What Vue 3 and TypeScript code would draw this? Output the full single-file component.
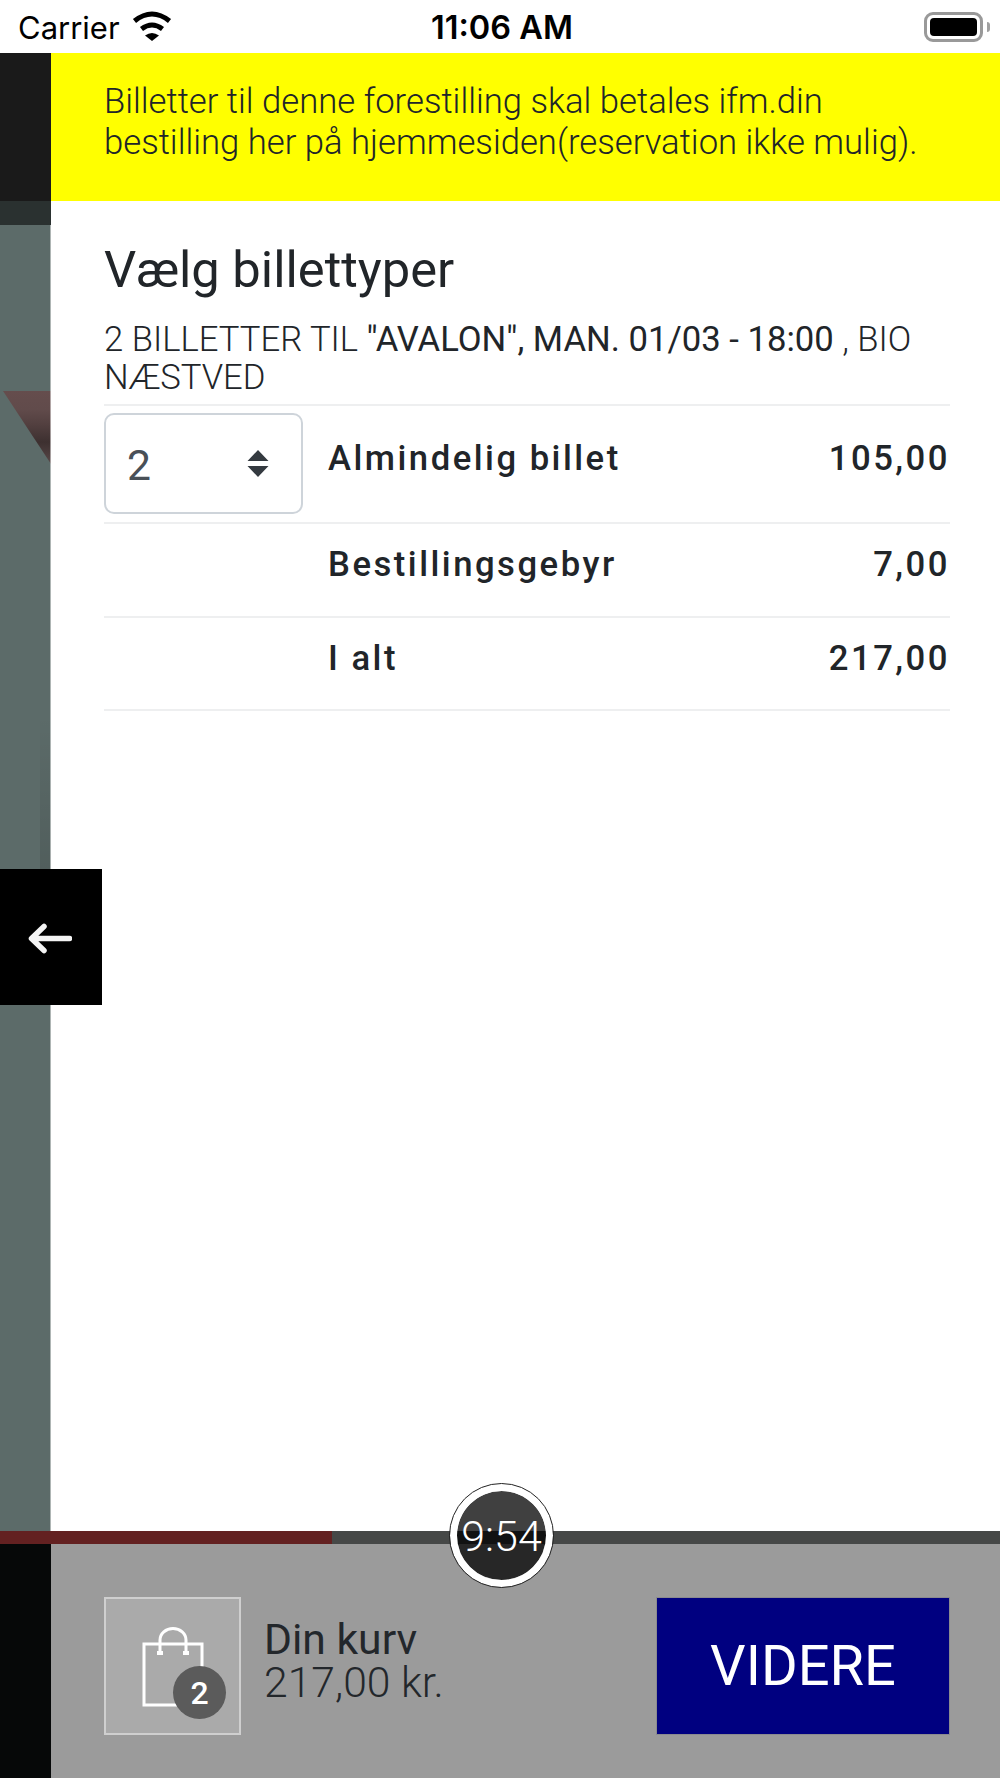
<script setup lang="ts">
interface Row { label: string; price: string; qty?: number; }
const rows: Row[] = [
  { label: 'Almindelig billet', price: '105,00', qty: 2 },
  { label: 'Bestillingsgebyr', price: '7,00' },
  { label: 'I alt', price: '217,00' },
];
</script>

<template>
  <div class="phone">
    <header class="status">
      <div class="status-left">
        <span class="carrier">Carrier</span>
        <svg class="wifi" viewBox="0 0 40 30" aria-hidden="true">
          <path d="M2.500 10 Q20 -4 37.500 10" fill="none" stroke="#000" stroke-width="5" />
          <path d="M9.500 18 Q20 10 30.500 18" fill="none" stroke="#000" stroke-width="5" />
          <path d="M20 30 L13 24.500 Q20 19.500 27 24.500 Z" fill="#000" />
        </svg>
      </div>
      <span class="clock">11:06 AM</span>
      <div class="battery">
        <span class="battery-body"><span class="battery-fill"></span></span>
        <span class="battery-tip"></span>
      </div>
    </header>

    <div class="middle">
      <aside class="strip">
        <div class="strip-dark"></div>
        <div class="strip-mid"></div>
        <div class="strip-photo">
          <svg class="triangle" viewBox="0 0 48 73" preserveAspectRatio="none" aria-hidden="true">
            <defs>
              <linearGradient id="tri" x1="0" y1="0" x2="0" y2="1">
                <stop offset="0" stop-color="#654d4d" />
                <stop offset="0.25" stop-color="#614b4b" />
                <stop offset="0.45" stop-color="#534040" />
                <stop offset="0.7" stop-color="#3d3030" />
                <stop offset="1" stop-color="#584848" />
              </linearGradient>
            </defs>
            <polygon points="0,0 48,0 48,73" fill="url(#tri)" />
          </svg>
          <div class="shade"></div>
        </div>
      </aside>

      <main class="content">
        <div class="notice">
          Billetter til denne forestilling skal betales ifm.din<br />
          bestilling her på hjemmesiden(reservation ikke mulig).
        </div>
        <section class="tickets">
          <h1 class="title">Vælg billettyper</h1>
          <p class="subtitle">
            2 BILLETTER TIL <span class="strong">"AVALON", MAN. 01/03 - 18:00</span> , BIO NÆSTVED
          </p>
          <div class="rule"></div>
          <div v-for="(row, i) in rows" :key="row.label" class="row" :class="{ first: i === 0 }">
            <div class="qty-cell">
              <div v-if="row.qty" class="select">
                <span class="select-value">{{ row.qty }}</span>
                <svg class="select-caret" viewBox="0 0 22 27" aria-hidden="true">
                  <path d="M11 0 L21.500 11 H0.500 Z M0.500 16 H21.500 L11 27 Z" fill="#343a40" />
                </svg>
              </div>
            </div>
            <span class="label">{{ row.label }}</span>
            <span class="price">{{ row.price }}</span>
          </div>
        </section>
      </main>

      <button class="back" type="button" aria-label="Tilbage">
        <svg viewBox="0 0 44 31" aria-hidden="true">
          <path d="M41.500 15.500 H5 M16 3.500 L3.500 15.500 L16 27.500" fill="none" stroke="#f4f4f4" stroke-width="5.500" stroke-linecap="round" stroke-linejoin="round" />
        </svg>
      </button>
    </div>

    <footer class="footer">
      <div class="progress"><div class="progress-value"></div></div>
      <div class="timer">9:54</div>
      <div class="footer-row">
        <div class="footer-strip"></div>
        <div class="footer-main">
          <div class="cart">
            <div class="cart-box">
              <svg class="bag" viewBox="0 0 62 80" aria-hidden="true">
                <path d="M2 17 H60 V78 H2 Z" fill="none" stroke="#fff" stroke-width="3" />
                <path d="M18 25 V13 A13 11.500 0 0 1 44 13 V25" fill="none" stroke="#fff" stroke-width="3" />
                <rect x="15" y="24" width="6" height="4" fill="#fff" />
                <rect x="41" y="24" width="6" height="4" fill="#fff" />
              </svg>
              <span class="badge">2</span>
            </div>
            <div class="cart-text">
              <div class="cart-title">Din kurv</div>
              <div class="cart-price">217,00 kr.</div>
            </div>
          </div>
          <button class="next" type="button">VIDERE</button>
        </div>
      </div>
    </footer>
  </div>
</template>

<style>
html, body { margin: 0; padding: 0; background: #fff; }
</style>

<style scoped>
.phone {
  width: 1000px;
  height: 1778px;
  display: flex;
  flex-direction: column;
  overflow: hidden;
  position: relative;
  font-family: Roboto, "Liberation Sans", sans-serif;
  color: #212529;
  background: #fff;
}
.status {
  height: 53px;
  flex: none;
  position: relative;
  display: flex;
  align-items: center;
  justify-content: space-between;
  padding: 0 10px 0 18px;
  box-sizing: border-box;
  background: #fff;
  color: #000;
}
.status-left { display: flex; align-items: center; gap: 12px; padding-top: 3px; }
.carrier { font-family: Inter, "Liberation Sans", sans-serif; font-size: 31px; line-height: 36px; }
.wifi { width: 40px; height: 30px; display: block; position: relative; top: -2px; }
.clock {
  position: absolute;
  left: 431px;
  top: 10px;
  font-family: Inter, "Liberation Sans", sans-serif;
  font-size: 32.5px;
  line-height: 36px;
  font-weight: 600;
}
.battery { display: flex; align-items: center; gap: 4px; }
.battery-body {
  width: 59px;
  height: 30px;
  box-sizing: border-box;
  border: 3px solid #999;
  border-radius: 9px;
  padding: 3px;
  display: block;
}
.battery-fill { display: block; width: 100%; height: 100%; background: #000; border-radius: 4px; }
.battery-tip { width: 3px; height: 10px; background: #a0a0a0; border-radius: 0 3px 3px 0; }

.middle { flex: 1; display: flex; position: relative; min-height: 0; }
.strip { width: 51px; flex: none; display: flex; flex-direction: column; }
.strip-dark { height: 148px; background: #1a1a1a; }
.strip-mid { height: 24px; background: #2a3130; }
.strip-photo { flex: 1; background: #5c6b69; position: relative; }
.strip-photo::after {
  content: "";
  position: absolute;
  top: 0;
  bottom: 0;
  right: 0;
  width: 1px;
  background: rgba(255, 255, 255, .5);
}
.triangle { position: absolute; left: 3px; top: 166px; width: 48px; height: 73px; display: block; }
.shade {
  position: absolute;
  left: 40px;
  right: 0;
  top: 490px;
  height: 154px;
  background: linear-gradient(to bottom, rgba(0, 0, 0, 0), rgba(0, 0, 0, .12));
}

.content { flex: 1; min-width: 0; background: #fff; }
.notice {
  height: 148px;
  box-sizing: border-box;
  padding: 28px 40px 0 53px;
  background: #ff0;
  font-size: 34.67px;
  line-height: 40.5px;
  font-weight: 300;
  white-space: nowrap;
}
.tickets { padding: 40px 50px 0 53px; }
.title { margin: 0; font-size: 50.67px; line-height: 58px; font-weight: 400; }
.subtitle {
  margin: 22px 0 0;
  font-size: 34.67px;
  line-height: 37.5px;
  font-weight: 300;
}
.strong { font-weight: 400; }
.rule { height: 2px; margin-top: 8px; background: #eeeff0; }
.row {
  display: flex;
  align-items: center;
  height: 94px;
  box-sizing: border-box;
  border-bottom: 2px solid #eeeff0;
  font-size: 34.67px;
  font-weight: 500;
  letter-spacing: 2.5px;
}
.row.first { height: 118px; }
.row:last-child { height: 93px; }
.qty-cell { width: 224px; flex: none; }
.select {
  width: 198.5px;
  height: 101px;
  margin-top: -2px;
  box-sizing: border-box;
  border: 2.67px solid #ced4da;
  border-radius: 10px;
  display: flex;
  align-items: center;
  justify-content: space-between;
  padding: 0 32px 0 21px;
  color: #495057;
  font-size: 42.67px;
  font-weight: 400;
  letter-spacing: 0;
  background: #fff;
}
.select-caret { width: 22px; height: 27px; display: block; }
.select-value { position: relative; top: 2px; }
.label { flex: 1; padding-bottom: 12px; }
.price { padding-bottom: 12px; }

.back {
  position: absolute;
  left: 0;
  top: 816px;
  width: 102px;
  height: 136px;
  margin: 0;
  padding: 0;
  border: 0;
  background: #000;
  display: flex;
  align-items: center;
  justify-content: center;
}
.back svg { width: 44px; height: 31px; display: block; position: relative; left: -1px; top: 1px; }

.footer { flex: none; position: relative; }
.progress { height: 13px; background: #464847; }
.progress-value { width: 332px; height: 100%; background: #632121; }
.timer {
  position: absolute;
  left: 450px;
  top: -47px;
  width: 103px;
  height: 103px;
  box-sizing: border-box;
  border: 7px solid #fff;
  outline: 1.5px solid #222;
  border-radius: 50%;
  background: rgba(0, 0, 0, .75);
  background-clip: padding-box;
  color: #fff;
  font-size: 43px;
  font-weight: 300;
  display: flex;
  align-items: center;
  justify-content: center;
  z-index: 1;
}
.footer-row { display: flex; height: 234px; }
.footer-strip { width: 51px; flex: none; background: #060808; }
.footer-main {
  flex: 1;
  background: #9b9b9b;
  display: flex;
  justify-content: space-between;
  align-items: flex-start;
  padding: 53px 50px 0 53px;
}
.cart { display: flex; align-items: center; gap: 23px; }
.cart-box {
  width: 137px;
  height: 138px;
  box-sizing: border-box;
  border: 2.67px solid #cfcfcf;
  background: #aaa;
  position: relative;
}
.bag { position: absolute; left: 36px; top: 28px; width: 62px; height: 80px; display: block; }
.badge {
  position: absolute;
  left: 67px;
  top: 67px;
  width: 53px;
  height: 53px;
  border-radius: 50%;
  background: #5b5b5b;
  color: #fff;
  font-size: 32px;
  font-weight: 500;
  display: flex;
  align-items: center;
  justify-content: center;
}
.cart-text { font-size: 42.67px; line-height: 43px; color: #23272b; padding-bottom: 10px; }
.cart-title { font-weight: 400; }
.cart-price { font-weight: 300; }
.next {
  width: 294px;
  height: 138px;
  margin: 0;
  padding: 0;
  border: 1px solid #8a8a8f;
  background: #000080;
  color: #fff;
  font-family: inherit;
  font-size: 56px;
  font-weight: 400;
}
</style>
